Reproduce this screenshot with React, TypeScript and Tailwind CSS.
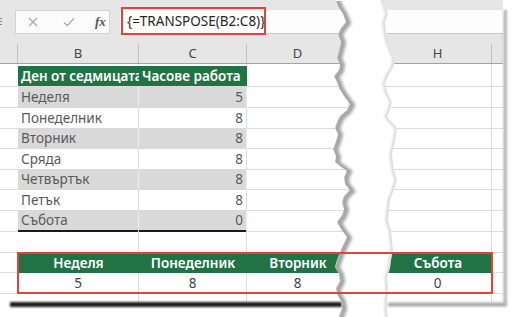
import React from "react";

const GRID = "grid grid-cols-[18px_121px_108px_102px_35px_108px_11px]";
const LINE = "border-[#dcdcdc]";
const GREEN = "bg-[#217346]";

const days: [string, number][] = [
  ["Неделя", 5],
  ["Понеделник", 8],
  ["Вторник", 8],
  ["Сряда", 8],
  ["Четвъртък", 8],
  ["Петък", 8],
  ["Събота", 0],
];

// white grid cell, column index 0..6
function gc(i: number) {
  return i === 0 || i === 6 ? `border-b ${LINE}` : `border-b border-r ${LINE}`;
}

const leftEdge: [number, number][] = [
  [335, -2], [338, 6], [343, 14], [346, 22], [341, 28], [338, 34], [341, 42], [339, 50],
  [337, 58], [340, 64], [339, 70], [334, 76], [337, 82], [339, 88], [344, 96], [350, 104],
  [347, 110], [340, 116], [337, 122], [335, 128], [338, 134], [336, 141], [333, 149],
  [336, 156], [335, 162], [340, 166], [347, 171], [344, 177], [345, 184], [350, 190],
  [344, 196], [342, 202], [344, 209], [342, 215], [337, 222], [341, 229], [347, 237],
  [343, 245], [340, 252], [337, 260], [335, 267], [339, 274], [340, 281], [336, 288],
  [337, 294], [341, 301], [342, 308], [338, 319],
];

const rightEdge: [number, number][] = [
  [383, -2], [386, 8], [388, 14], [385, 22], [386, 32], [388, 42], [392, 52], [395, 60],
  [393, 68], [388, 76], [385, 84], [387, 92], [392, 102], [390, 110], [387, 117], [392, 122],
  [397, 128], [396, 137], [394, 146], [392, 154], [393, 162], [394, 170], [397, 180],
  [394, 190], [390, 200], [389, 210], [388, 220], [391, 230], [392, 240], [393, 250],
  [391, 260], [390, 268], [387, 278], [388, 287], [388, 294], [387, 302], [387, 310], [388, 319],
];

const pts = (a: [number, number][]) => a.map((p) => p.join(",")).join(" ");
const tearPts = pts([...leftEdge, ...[...rightEdge].reverse()]);

function Tear() {
  return (
    <svg
      className="absolute inset-0 z-10 pointer-events-none"
      width="520"
      height="317"
      viewBox="0 0 520 317"
    >
      <defs>
        <filter id="b1" filterUnits="userSpaceOnUse" x="0" y="0" width="520" height="317">
          <feGaussianBlur stdDeviation="1" />
        </filter>
        <filter id="b2" filterUnits="userSpaceOnUse" x="0" y="0" width="520" height="317">
          <feGaussianBlur stdDeviation="1.6" />
        </filter>
        <clipPath id="tearClip">
          <polygon points={tearPts} />
        </clipPath>
      </defs>
      {/* paper shadows */}
      <rect x="10" y="302" width="332" height="5" fill="#1a1a1a" filter="url(#b1)" />
      <rect x="388" y="302.5" width="118" height="4" fill="#a8a8a8" filter="url(#b1)" />
      <rect x="503.5" y="10" width="3.5" height="296" fill="#b4b4b4" filter="url(#b1)" />
      {/* the torn gap */}
      <polygon points={tearPts} fill="#fff" />
      <g clipPath="url(#tearClip)">
        <polyline
          points={pts(leftEdge)}
          fill="none"
          stroke="#8c8c8c"
          strokeWidth="6"
          transform="translate(2 1)"
          filter="url(#b2)"
          opacity="0.8"
        />
        <polyline
          points={pts(rightEdge)}
          fill="none"
          stroke="#bdbdbd"
          strokeWidth="3"
          transform="translate(-1 0)"
          filter="url(#b1)"
          opacity="0.6"
        />
      </g>
    </svg>
  );
}

function FormulaBar() {
  return (
    <div className="flex h-[34px] bg-[#e6e6e6] pt-[10px]">
      <div className="flex w-[15px] flex-col items-start gap-[2px] pt-[8px]">
        <span className="h-[1px] w-[2px] bg-[#8a8a8a]" />
        <span className="h-[1px] w-[2px] bg-[#8a8a8a]" />
        <span className="h-[1px] w-[2px] bg-[#8a8a8a]" />
      </div>
      <div className="flex h-[24px] w-[95px] items-center border border-[#d3d3d3] bg-[#fbfbfb]">
        <svg className="ml-[12px]" width="10" height="10" viewBox="0 0 10 10">
          <path d="M1 1L9 9M9 1L1 9" stroke="#a8a8a8" strokeWidth="1.2" />
        </svg>
        <svg className="ml-[25px]" width="12" height="10" viewBox="0 0 12 10">
          <path d="M1 5.5L4.2 8.6L11 1.4" stroke="#a8a8a8" strokeWidth="1.3" fill="none" />
        </svg>
        <span className="ml-[20px] font-['Liberation_Serif',serif] text-[13px] font-bold italic text-[#555]">
          fx
        </span>
      </div>
      <div className="relative ml-[10px] flex h-[24px] flex-1 items-center border-b border-[#c8c8c8] bg-[#fdfdfd] pl-[7px]">
        <span className="text-[13.5px] text-[#262626]">{"{=TRANSPOSE(B2:C8)}"}</span>
        <div className="absolute left-[1px] top-[-3px] z-20 h-[28px] w-[145px] border-2 border-[#e5413b]" />
      </div>
    </div>
  );
}

function ColumnHeader() {
  const labels = ["", "B", "C", "D", "", "H", ""];
  return (
    <div className={`${GRID} h-[30px] items-end border-b border-[#a3a3a3] bg-[#e6e6e6]`}>
      {labels.map((l, i) => (
        <div
          key={i}
          className={`flex h-[19px] items-center justify-center text-[13px] text-[#444] ${
            i < 6 ? "border-r border-[#c2c2c2]" : ""
          }`}
        >
          {l}
        </div>
      ))}
    </div>
  );
}

export default function App() {
  return (
    <div className="relative h-[317px] w-[520px] overflow-hidden bg-white font-['Noto_Sans','Open_Sans',sans-serif]">
      <div className="flex w-[503px] flex-col">
        <FormulaBar />
        <ColumnHeader />

        {/* table header */}
        <div className={`${GRID} h-[23px]`}>
          <div className={gc(0)} />
          <div className={`border-b ${LINE} pt-[2px]`}>
            <div className={`${GREEN} h-[20px] overflow-hidden whitespace-nowrap pl-[3px] text-[13.5px] font-semibold leading-[20px] text-white`}>
              Ден от седмицата
            </div>
          </div>
          <div className={`border-b ${LINE} pt-[2px]`}>
            <div className={`${GREEN} h-[20px] overflow-hidden whitespace-nowrap pl-[3px] text-[13.5px] font-semibold leading-[20px] text-white`}>
              Часове работа
            </div>
          </div>
          {[3, 4, 5, 6].map((i) => (
            <div key={i} className={gc(i)} />
          ))}
        </div>

        {/* data rows */}
        {days.map(([day, hours], r) => {
          const shaded = r % 2 === 0;
          const last = r === days.length - 1;
          const fill = shaded
            ? "bg-[#d9d9d9] border-r border-b border-[#d9d9d9] border-r-[#ececec]"
            : `bg-white border-r border-b ${LINE}`;
          const bottom = last ? "border-b-2 border-b-[#1a1a1a]" : "";
          return (
            <div key={day} className={`${GRID} h-[20.5px] text-[13.5px] text-[#595959]`}>
              <div className={gc(0)} />
              <div className={`${fill} ${bottom} flex items-center pl-[3px]`}>{day}</div>
              <div className={`${fill} ${bottom} flex items-center justify-end pr-[3px]`}>{hours}</div>
              {[3, 4, 5, 6].map((i) => (
                <div key={i} className={gc(i)} />
              ))}
            </div>
          );
        })}

        {/* empty row */}
        <div className={`${GRID} h-[22px]`}>
          {[0, 1, 2, 3, 4, 5, 6].map((i) => (
            <div key={i} className={gc(i)} />
          ))}
        </div>

        {/* transposed result */}
        <div className="relative">
          <div className={`${GRID} h-[20.5px] text-[13.5px] font-semibold text-white`}>
            <div className={gc(0)} />
            <div className={`${GREEN} flex items-center justify-center`}>Неделя</div>
            <div className={`${GREEN} flex items-center justify-center`}>Понеделник</div>
            <div className={`${GREEN} flex items-center justify-center`}>Вторник</div>
            <div className={GREEN} />
            <div className={`${GREEN} flex items-center justify-center`}>Събота</div>
            <div className={gc(6)} />
          </div>
          <div className={`${GRID} h-[20px] text-[13.5px] text-[#37425a]`}>
            <div className={gc(0)} />
            <div className={`${gc(1)} flex items-center justify-center`}>5</div>
            <div className={`${gc(2)} flex items-center justify-center`}>8</div>
            <div className={`${gc(3)} flex items-center justify-center`}>8</div>
            <div className={gc(4)} />
            <div className={`${gc(5)} flex items-center justify-center`}>0</div>
            <div className={gc(6)} />
          </div>
          <div className="absolute bottom-[-1px] left-[17px] right-[10px] top-[-1px] z-20 border-2 border-[#e5413b]" />
        </div>

        {/* partial row under the table */}
        <div className={`${GRID} h-[9px]`}>
          {[0, 1, 2, 3, 4, 5, 6].map((i) => (
            <div key={i} className={i === 0 || i === 6 ? "" : `border-r ${LINE}`} />
          ))}
        </div>
      </div>
      <Tear />
    </div>
  );
}
